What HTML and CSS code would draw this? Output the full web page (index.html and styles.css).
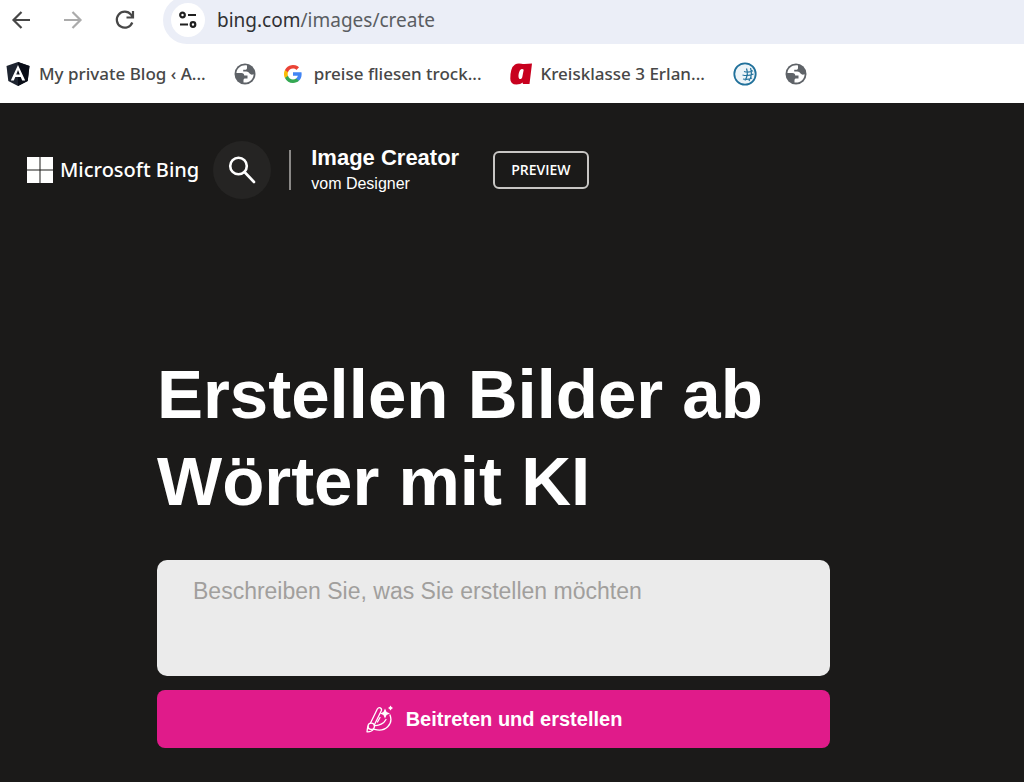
FILE: index.html
```html
<!DOCTYPE html>
<html lang="de">
<head>
<meta charset="utf-8">
<title>Image Creator</title>
<link rel="stylesheet" href="styles.css">
</head>
<body>
<svg class="defs" width="0" height="0" aria-hidden="true">
  <symbol id="globe" viewBox="0 0 22 22">
    <circle cx="11" cy="11" r="10.500" fill="#5f6368"/>
    <path d="M13 2.500C7.500 1.600 3 5 2.400 10h5c2 0 2.800 1 2.800 2.600h3.300v2.800h-2.300c-1 0-1.700.7-1.700 1.700v2.300c5.500.8 10-3 10.100-8.200-1.500.8-3 .6-4-.6-.8-1.200-1.800-2-3.400-2H9.200V6.800h2c1.200 0 1.800-.7 1.800-1.800z" fill="#fff"/>
  </symbol>
</svg>
<header class="browser">
  <div class="toolbar">
    <div class="nav">
      <button class="nav-button" aria-label="Zurück"><svg width="20" height="20" viewBox="0 0 20 20" fill="none" stroke="#474747" stroke-width="2.200"><path d="M19 10H3M10.500 2 2.500 10l8 8"/></svg></button>
      <button class="nav-button" aria-label="Vorwärts" disabled><svg width="20" height="20" viewBox="0 0 20 20" fill="none" stroke="#ababab" stroke-width="2.200"><path d="M1 10h16M9.500 2l8 8-8 8"/></svg></button>
      <button class="nav-button" aria-label="Neu laden"><svg width="20" height="20" viewBox="0 0 20 20" fill="none" stroke="#474747" stroke-width="2.200"><path d="M17.300 12.500A8 8 0 1 1 16 4.600l1.500 1.900M18 1v6.500h-6.500"/></svg></button>
    </div>
    <div class="address">
      <button class="site-info" aria-label="Website-Informationen"><svg width="20" height="20" viewBox="0 0 20 20" fill="none" stroke="#1f1f1f" stroke-width="2.200"><circle cx="4.500" cy="5" r="2.300"/><path d="M10 5h8M2 14.500h8"/><circle cx="15" cy="14.500" r="2.300"/></svg></button>
      <span class="url"><span class="host">bing.com</span>/images/create</span>
    </div>
  </div>
  <nav class="bookmarks">
    <a class="bookmark" href="#"><svg width="24" height="24" viewBox="0 0 24 24"><path d="M12 0l11.500 4-1.800 15L12 24l-9.700-5L.5 4z" fill="#1e2430"/><path d="M12 0l11.500 4-1.800 15L12 24z" fill="#090d17"/><path fill-rule="evenodd" d="M12 3 4.800 18.500h3L9.300 15h5.400l1.500 3.500h3zM12 8l1.800 4.500h-3.600z" fill="#fff"/></svg><span>My private Blog ‹ A...</span></a>
    <a class="bookmark" href="#" aria-label="Website"><svg width="22" height="22"><use href="#globe"/></svg></a>
    <a class="bookmark google" href="#"><svg width="18" height="18" viewBox="0 0 18 18"><path fill="#4285f4" d="M17.640 9.200c0-.640-.060-1.250-.160-1.840H9v3.480h4.840a4.140 4.140 0 0 1-1.800 2.720v2.260h2.920c1.700-1.570 2.680-3.880 2.680-6.620z"/><path fill="#34a853" d="M9 18c2.430 0 4.470-.8 5.960-2.180l-2.920-2.260c-.8.540-1.840.860-3.040.860-2.340 0-4.330-1.580-5.040-3.710H.96v2.330A9 9 0 0 0 9 18z"/><path fill="#fbbc05" d="M3.960 10.710a5.400 5.400 0 0 1 0-3.420V4.960h-3a9 9 0 0 0 0 8.080z"/><path fill="#ea4335" d="M9 3.580c1.320 0 2.500.45 3.440 1.350l2.580-2.590A9 9 0 0 0 .96 4.960l3 2.330C4.670 5.160 6.660 3.580 9 3.580z"/></svg><span>preise fliesen trock...</span></a>
    <a class="bookmark" href="#"><svg width="22" height="22" viewBox="0 0 22 22"><path fill="#c8001e" fill-rule="evenodd" d="M5 1.500Q7.500 0 11.500.8q2 .4 3 .2L22 .500 19.500 21h-6.700l.1-1.600Q10.500 21.500 6.500 21.500.3 21.500.3 15.700.3 4.500 5 1.500zM12 6c-2.400 0-3.500 4.500-3.500 7.500 0 3.300 3.200 3.300 3.800.5L13.700 6.700Q13 6 12 6z"/></svg><span>Kreisklasse 3 Erlan...</span></a>
    <a class="bookmark" href="#" aria-label="Globus"><svg width="24" height="24" viewBox="0 0 24 24" fill="none" stroke="#21719b"><circle cx="12" cy="12" r="10.700" fill="#edf4f8" stroke-width="1.800"/><path stroke-width="1.200" d="M11 9.500c3 1 6 .8 9-.8M9.500 13c4 1 7 .8 11-1M10 17c3 .8 6 .5 9-1M13.500 6.500c1.500 4 1 8-1.500 12M17.500 6c1.500 4 1 9-1.500 13"/></svg></a>
    <a class="bookmark" href="#" aria-label="Website"><svg width="22" height="22"><use href="#globe"/></svg></a>
  </nav>
</header>
<main class="page">
  <div class="brand-row">
    <a class="logo" href="#"><svg width="26" height="26" viewBox="0 0 26 26" fill="#fff"><path d="M0 0h12.500v12.500H0zM13.500 0H26v12.500H13.500zM0 13.500h12.500V26H0zM13.500 13.500H26V26H13.500z"/></svg><span>Microsoft Bing</span></a>
    <button class="search" aria-label="Suchen"><svg width="28" height="28" viewBox="0 0 28 28" fill="none" stroke="#fff" stroke-width="2.600"><circle cx="10.500" cy="10" r="8.300"/><path stroke-linecap="round" d="M16.500 16 26 26"/></svg></button>
    <div class="product">
      <span class="product-name">Image Creator</span>
      <span class="product-by">vom Designer</span>
    </div>
    <span class="preview">PREVIEW</span>
  </div>
  <form class="creator">
    <h1>Erstellen Bilder ab Wörter mit KI</h1>
    <textarea class="prompt" aria-label="Bildbeschreibung" placeholder="Beschreiben Sie, was Sie erstellen möchten"></textarea>
    <button class="submit" type="button"><svg width="28" height="28" viewBox="0 0 28 28" fill="none" stroke="#fff" stroke-width="1.300" stroke-linejoin="round" stroke-linecap="round"><path d="M5.500 18 12.300 4q1.300-2 3-1.200 1.800.9 1 2.900L9.300 20"/><circle cx="6.200" cy="21.300" r="3.200"/><path d="M3.200 21c-1 1.500-.8 3.500-1.200 5.800 2.500.2 5-.3 6.500-2.800M9.500 20.500c4.500.5 9.500-2 11.500-6M12.500 17l2.500-4.500M25 10c3.500 9-4.500 17.500-15.500 14.300"/><path fill="#fff" stroke="none" d="m20 3.500 1.600 3.400L25 8.500l-3.400 1.600L20 13.500l-1.600-3.400L15 8.500l3.400-1.600zM25.500.5l1 1.500 1.500 1-1.500 1-1 1.500-1-1.500L23 3l1.500-1z"/></svg><span>Beitreten und erstellen</span></button>
  </form>
</main>
</body>
</html>
```
FILE: styles.css
```css
* { box-sizing: border-box; }
body {
  margin: 0;
  min-height: 100vh;
  display: flex;
  flex-direction: column;
  background: #1b1a19;
  font-family: "Liberation Sans", Arial, sans-serif;
}
button { border: 0; padding: 0; background: none; font: inherit; color: inherit; }
a { color: inherit; text-decoration: none; }
svg { display: block; flex: none; }
.defs { position: absolute; }
.browser { background: #fff; font-family: "Noto Sans", sans-serif; color: #474747; }
.toolbar { display: flex; align-items: stretch; height: 44px; overflow: hidden; }
.nav { display: flex; align-items: center; gap: 32px; padding: 0 28px 4px 11px; }
.address {
  flex: 1;
  display: flex;
  align-items: center;
  gap: 12px;
  height: 48px;
  margin-top: -4px;
  padding-left: 8px;
  border-radius: 24px 0 0 24px;
  background: #ebeef7;
}
.site-info {
  display: grid;
  place-items: center;
  width: 34px;
  height: 34px;
  border-radius: 50%;
  background: #fff;
}
.url { font-size: 19px; line-height: 28px; color: #5a5d62; }
.host { color: #303134; }
.bookmarks { display: flex; align-items: center; gap: 28px; height: 59px; padding-left: 6px; font-size: 17px; font-weight: 500; line-height: 24px; }
.bookmark { display: flex; align-items: center; gap: 9px; white-space: nowrap; }
.google { gap: 12px; }
.page { flex: 1; padding: 38px 27px 34px; color: #fff; }
.brand-row { display: flex; align-items: center; }
.logo { display: flex; align-items: center; gap: 7px; font-family: "Noto Sans", sans-serif; font-size: 20px; font-weight: 500; line-height: 32px; white-space: nowrap; }
.search {
  display: grid;
  place-items: center;
  width: 58px;
  height: 58px;
  margin: 0 18px 0 14px;
  border-radius: 50%;
  background: #252423;
}
.product { display: flex; flex-direction: column; padding-left: 20px; border-left: 2px solid #8a8886; white-space: nowrap; }
.product-name { font-size: 22px; line-height: 24px; font-weight: 700; margin-top: -4px; }
.product-by { font-size: 16px; line-height: 28px; margin-bottom: -8px; }
.preview {
  margin-left: 34px;
  padding: 6px 16px;
  border: 2px solid #c8c6c4;
  border-radius: 6px;
  font-family: "Open Sans", sans-serif;
  font-size: 14px;
  font-weight: 600;
  line-height: 22px;
}
.creator { display: flex; flex-direction: column; max-width: 673px; margin: 152px 0 0 130px; }
h1 { margin: 0 0 35px; font-size: 69px; line-height: 87px; }
.prompt {
  width: 100%;
  height: 116px;
  padding: 16px 36px;
  border: 0;
  border-radius: 10px;
  background: #ebebeb;
  color: #1b1a19;
  font: 23px/30px "Liberation Sans", Arial, sans-serif;
  resize: none;
}
.prompt::placeholder { color: #a19f9d; opacity: 1; }
.submit {
  display: flex;
  align-items: center;
  justify-content: center;
  gap: 13px;
  height: 58px;
  margin-top: 14px;
  border-radius: 8px;
  background: #e01b8a;
  font-size: 20px;
  line-height: 24px;
  font-weight: 700;
}
```
